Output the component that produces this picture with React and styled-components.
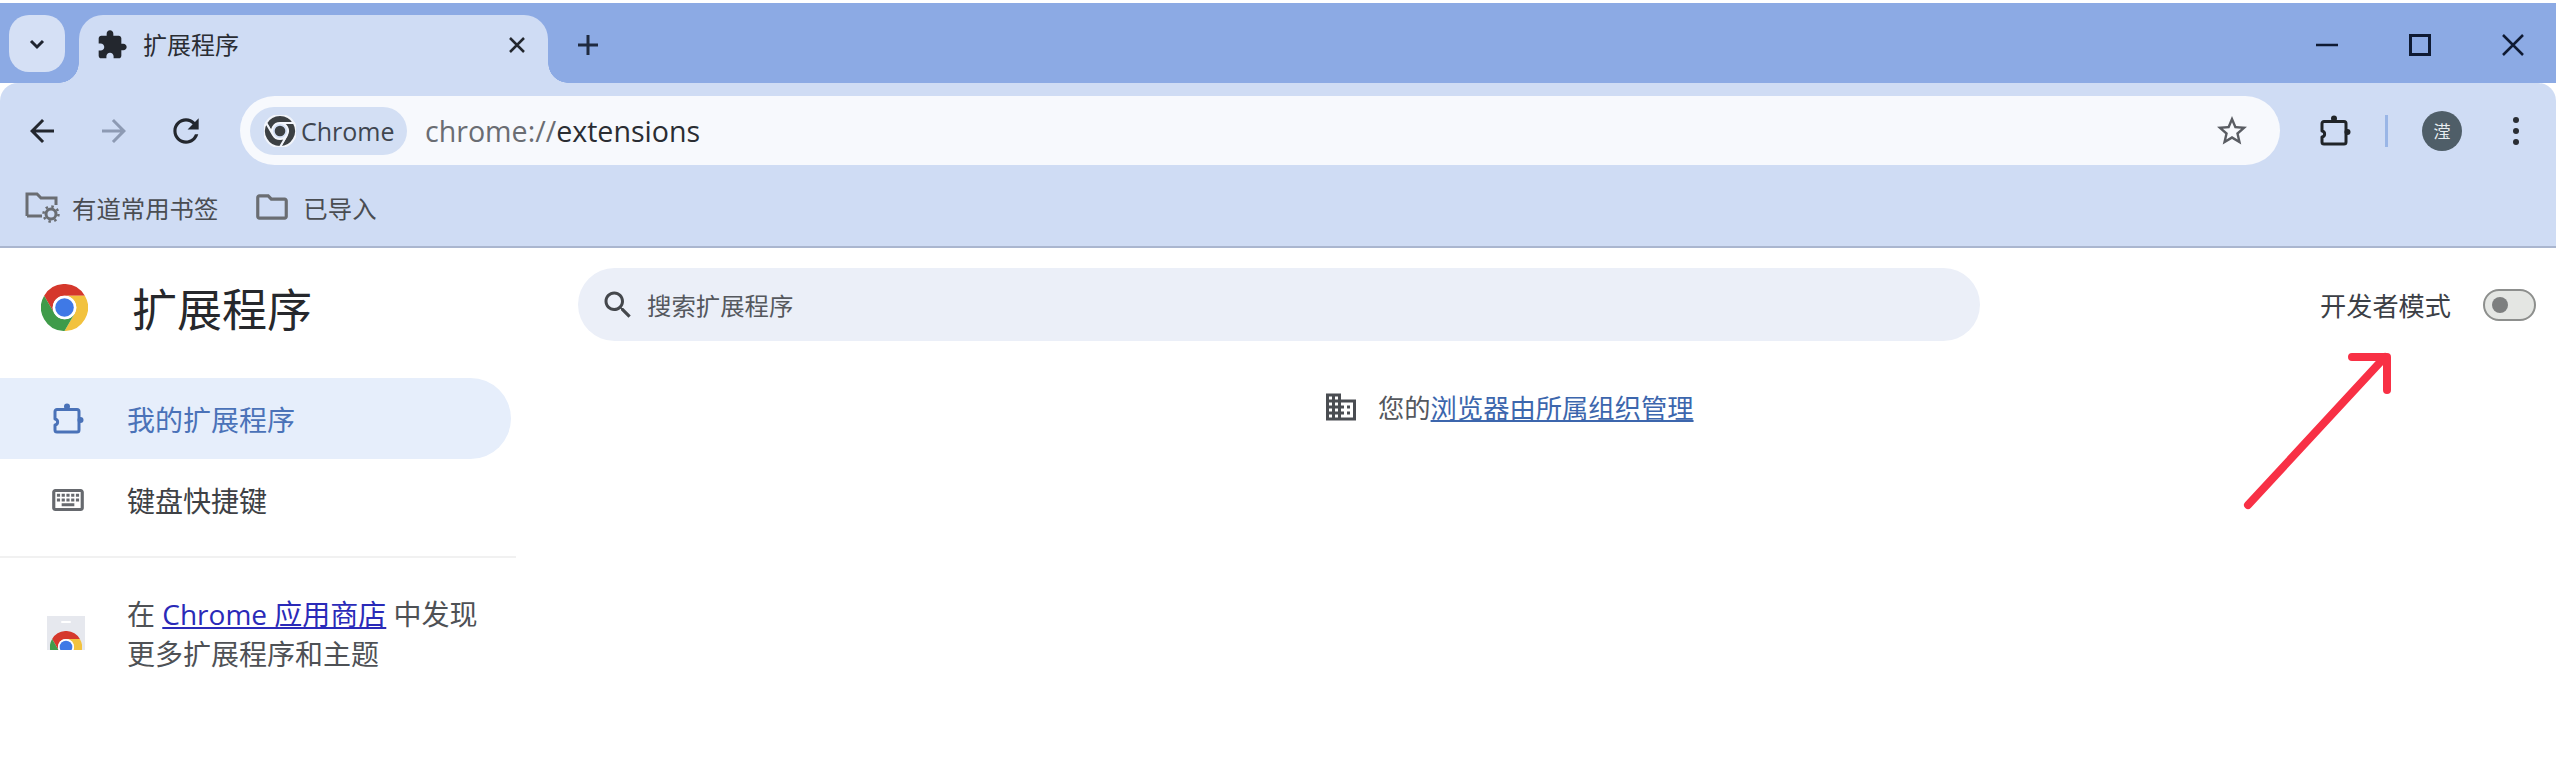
import React from "react";
import styled, { createGlobalStyle } from "styled-components";

const GlobalStyles = createGlobalStyle`
  html, body {
    margin: 0;
    padding: 0;
    background: #fff;
  }
  body {
    font-family: "Open Sans", "Noto Sans CJK SC", sans-serif;
    overflow: hidden;
  }
  svg {
    flex: none;
    display: block;
  }
`;

const STRIP = "#8caae4";
const BAR = "#cfdcf4";

const Window = styled.div`
  width: 2556px;
  height: 758px;
  display: flex;
  flex-direction: column;
  position: relative;
  overflow: hidden;
`;

const TabStrip = styled.div`
  height: 80px;
  margin-top: 3px;
  flex: none;
  background: ${STRIP};
  display: flex;
  align-items: flex-start;
  padding: 12px 32px 0 9px;
  box-sizing: border-box;
`;

const TabSearch = styled.div`
  width: 56px;
  height: 57px;
  border-radius: 20px;
  background: #d5e0f5;
  color: #1f2430;
  display: flex;
  align-items: center;
  justify-content: center;
`;

const Tab = styled.div`
  width: 469px;
  height: 68px;
  margin-left: 14px;
  padding: 0 22px 8px 17px;
  box-sizing: border-box;
  position: relative;
  background: ${BAR};
  border-radius: 24px 24px 0 0;
  display: flex;
  align-items: center;
  color: #23272e;

  &::before,
  &::after {
    content: "";
    position: absolute;
    bottom: 0;
    width: 20px;
    height: 20px;
  }
  &::before {
    left: -20px;
    background: radial-gradient(circle at 0 0, transparent 19.5px, ${BAR} 20px);
  }
  &::after {
    right: -20px;
    background: radial-gradient(circle at 100% 0, transparent 19.5px, ${BAR} 20px);
  }
`;

const TabTitle = styled.span`
  margin-left: 15px;
  font-size: 24px;
  line-height: 1;
  flex: 1;
  color: #2a2d33;
`;

const NewTab = styled.div`
  margin-left: 28px;
  height: 60px;
  display: flex;
  align-items: center;
  color: #1f2a40;
`;

const WindowControls = styled.div`
  margin-left: auto;
  height: 40px;
  margin-top: 10px;
  display: flex;
  align-items: center;
  gap: 71px;
  color: #0f1a33;
`;

const Toolbar = styled.div`
  flex: none;
  height: 165px;
  background: ${BAR};
  border-radius: 18px 18px 0 0;
  border-bottom: 2px solid #aab6cf;
  box-sizing: border-box;
  display: flex;
  flex-direction: column;
  position: relative;
`;

const NavRow = styled.div`
  height: 95px;
  display: flex;
  align-items: center;
  padding: 0 24px 0 28px;
  box-sizing: border-box;
`;

const NavButton = styled.div`
  width: 28px;
  height: 28px;
  margin-right: ${(p) => p.$gap}px;
  display: flex;
  align-items: center;
  justify-content: center;
  color: ${(p) => (p.$dim ? "#8d9ab3" : "#23272e")};
`;

const Omnibox = styled.div`
  width: 2040px;
  height: 69px;
  margin-left: 40px;
  padding: 0 13px 0 10px;
  box-sizing: border-box;
  background: #f7f9fd;
  border-radius: 35px;
  display: flex;
  align-items: center;
`;

const OriginChip = styled.div`
  width: 157px;
  height: 48px;
  border-radius: 24px;
  background: #d3dff4;
  display: flex;
  align-items: center;
  padding-left: 14px;
  box-sizing: border-box;
  color: #3f4650;
  font-size: 25px;
  gap: 5px;
`;

const Url = styled.div`
  margin-left: 18px;
  font-size: 28.6px;
  flex: 1;
  color: #6a6d73;

  b {
    font-weight: 400;
    color: #2a2d33;
  }
`;

const StarWrap = styled.div`
  margin-right: 17px;
  display: flex;
  color: #5a5d63;
`;

const ToolIcons = styled.div`
  margin-left: 38px;
  display: flex;
  align-items: center;
  color: #202428;
`;

const Separator = styled.div`
  width: 3px;
  height: 32px;
  background: #9ab6e6;
  margin: 0 34px 0 33px;
`;

const Avatar = styled.div`
  width: 40px;
  height: 40px;
  border-radius: 50%;
  background: #4f5e68;
  color: #e8edf0;
  font-size: 17px;
  display: flex;
  align-items: center;
  justify-content: center;
`;

const Dots = styled.div`
  margin-left: 51px;
  display: flex;
  flex-direction: column;
  gap: 5px;

  i {
    display: block;
    width: 6px;
    height: 6px;
    border-radius: 50%;
    background: #2a2d33;
  }
`;

const BookmarkRow = styled.div`
  flex: 1;
  display: flex;
  align-items: center;
  padding-left: 24px;
  padding-bottom: 10px;
  box-sizing: border-box;
`;

const Bookmark = styled.div`
  display: flex;
  align-items: center;
  gap: ${(p) => p.$gap}px;
  margin-right: 35px;
  font-size: 24.4px;
  color: #4a4d52;
`;

const Page = styled.div`
  flex: 1;
  display: flex;
  background: #fff;
`;

const Sidebar = styled.aside`
  width: 516px;
  flex: none;
`;

const Brand = styled.div`
  height: 130px;
  display: flex;
  align-items: center;
  padding: 0 0 12px 41px;
  box-sizing: border-box;
  gap: 44px;
`;

const BrandTitle = styled.h1`
  margin: 0;
  font-size: 45px;
  font-weight: 400;
  color: #26282c;
`;

const MenuItem = styled.div`
  width: 511px;
  height: 81px;
  display: flex;
  align-items: center;
  padding-left: ${(p) => p.$pad}px;
  box-sizing: border-box;
  border-radius: 0 41px 41px 0;
  font-size: 28px;
  background: ${(p) => (p.$active ? "#e6eefb" : "transparent")};
  color: ${(p) => (p.$active ? "#4a72b8" : "#3e4145")};
`;

const MenuIcon = styled.span`
  width: ${(p) => 127 - p.$pad}px;
  display: flex;
`;

const Divider = styled.div`
  height: 2px;
  margin-top: 16px;
  background: #f1f1f1;
`;

const StoreRow = styled.div`
  display: flex;
  align-items: center;
  padding: 36px 0 0 47px;
  gap: 42px;
`;

const StoreText = styled.div`
  font-size: 28px;
  line-height: 40px;
  color: #4e5155;
  white-space: nowrap;

  a {
    color: #2a2ab8;
    text-decoration: underline;
  }
`;

const Main = styled.main`
  flex: 1;
  min-width: 0;
  padding-top: 20px;
`;

const HeaderRow = styled.div`
  display: flex;
  align-items: center;
  padding: 0 20px 0 62px;
`;

const SearchBox = styled.div`
  width: 1402px;
  height: 73px;
  border-radius: 37px;
  background: #ebeff8;
  display: flex;
  align-items: center;
  padding-left: 22px;
  box-sizing: border-box;
  gap: 11px;
  font-size: 24.4px;
  color: #55585e;
`;

const DevMode = styled.div`
  margin-left: auto;
  display: flex;
  align-items: center;
  gap: 32px;
  font-size: 26.2px;
  color: #3c4046;
`;

const Toggle = styled.div`
  width: 53px;
  height: 32px;
  border-radius: 16px;
  border: 2px solid #8d8f8d;
  background: #e4e6e3;
  box-sizing: border-box;
  display: flex;
  align-items: center;
  padding-left: 7px;

  i {
    display: block;
    width: 16px;
    height: 16px;
    border-radius: 50%;
    background: #7d7f7f;
  }
`;

const Managed = styled.div`
  margin: 46px 0 0 807px;
  display: flex;
  align-items: center;
  gap: 19px;
  font-size: 26.3px;
  color: #55585e;

  a {
    color: #3c66ad;
    text-decoration: underline;
  }
`;

const ArrowMark = styled.svg`
  position: absolute;
  left: 2230px;
  top: 340px;
`;

const Icon = ({ d, size = 24, vb = 24, color }) => (
  <svg width={size} height={size} viewBox={`0 0 ${vb} ${vb}`} fill={color || "currentColor"}>
    <path d={d} />
  </svg>
);

const ICONS = {
  puzzle:
    "M20.5 11H19V7c0-1.1-.9-2-2-2h-4V3.5C13 2.12 11.88 1 10.5 1S8 2.12 8 3.5V5H4c-1.1 0-1.99.9-1.99 2v3.8H3.5c1.49 0 2.7 1.21 2.7 2.7s-1.21 2.7-2.7 2.7H2V20c0 1.1.9 2 2 2h3.8v-1.5c0-1.49 1.21-2.7 2.7-2.7 1.49 0 2.7 1.21 2.7 2.7V22H17c1.1 0 2-.9 2-2v-4h1.5c1.38 0 2.5-1.12 2.5-2.5S21.88 11 20.5 11z",
  back: "M20 11H7.83l5.59-5.59L12 4l-8 8 8 8 1.41-1.41L7.83 13H20v-2z",
  forward: "M4 11h12.17l-5.59-5.59L12 4l8 8-8 8-1.41-1.41L16.17 13H4v-2z",
  reload:
    "M17.65 6.35C16.2 4.9 14.21 4 12 4c-4.42 0-7.99 3.58-7.99 8s3.57 8 7.99 8c3.73 0 6.84-2.55 7.73-6h-2.08c-.82 2.33-3.04 4-5.65 4-3.31 0-6-2.69-6-6s2.69-6 6-6c1.66 0 3.14.69 4.22 1.78L13 11h7V4l-2.35 2.35z",
  star: "M22 9.24l-7.19-.62L12 2 9.19 8.63 2 9.24l5.46 4.73L5.82 21 12 17.27 18.18 21l-1.63-7.03L22 9.24zM12 15.4l-3.76 2.27 1-4.28-3.32-2.88 4.38-.38L12 6.1l1.71 4.04 4.38.38-3.32 2.88 1 4.28L12 15.4z",
  search:
    "M15.5 14h-.79l-.28-.27C15.41 12.59 16 11.11 16 9.5 16 5.91 13.09 3 9.5 3S3 5.91 3 9.5 5.91 16 9.5 16c1.61 0 3.09-.59 4.23-1.57l.27.28v.79l5 4.99L20.49 19l-4.99-5zm-6 0C7.01 14 5 11.99 5 9.5S7.01 5 9.5 5 14 7.01 14 9.5 11.99 14 9.5 14z",
  domain:
    "M12 7V3H2v18h20V7H12zM6 19H4v-2h2v2zm0-4H4v-2h2v2zm0-4H4V9h2v2zm0-4H4V5h2v2zm4 12H8v-2h2v2zm0-4H8v-2h2v2zm0-4H8V9h2v2zm0-4H8V5h2v2zm10 12h-8v-2h2v-2h-2v-2h2v-2h-2V9h8v10zm-2-8h-2v2h2v-2zm0 4h-2v2h2v-2z",
  keyboard:
    "M20 5H4c-1.1 0-1.99.9-1.99 2L2 17c0 1.1.9 2 2 2h16c1.1 0 2-.9 2-2V7c0-1.1-.9-2-2-2zm0 12H4V7h16v10zm-9-9h2v2h-2zm0 3h2v2h-2zM8 8h2v2H8zm0 3h2v2H8zm-3 0h2v2H5zm0-3h2v2H5zm3 6h8v2H8zm6-3h2v2h-2zm0-3h2v2h-2zm3 3h2v2h-2zm0-3h2v2h-2z",
  folder:
    "M9.17 6l2 2H20v10H4V6h5.17M10 4H4c-1.1 0-1.99.9-1.99 2L2 18c0 1.1.9 2 2 2h16c1.1 0 2-.9 2-2V8c0-1.1-.9-2-2-2h-8l-2-2z",
};

// outline puzzle piece used by the toolbar and the active menu row
const PuzzleOutline = ({ size = 34 }) => (
  <svg width={size} height={size} viewBox="0 0 34 34" fill="none" stroke="currentColor" strokeWidth="3" strokeLinejoin="round">
    <path d="M6 7.5h20a2 2 0 0 1 2 2V28a2 2 0 0 1-2 2H6a2 2 0 0 1-2-2v-5c3.5-.5 3.500-5.500 0-6V9.500a2 2 0 0 1 2-2z" />
    <circle cx="16" cy="4.500" r="3" fill="currentColor" stroke="none" />
    <circle cx="29.500" cy="18" r="3" fill="currentColor" stroke="none" />
  </svg>
);

const CHROME_SEGMENT = "M3.2 12A24 24 0 0 1 44.8 12L24 12A12 12 0 0 0 13.6 30Z";

const ChromeLogo = ({ size = 47 }) => (
  <svg width={size} height={size} viewBox="0 0 48 48">
    <path d={CHROME_SEGMENT} fill="#d5382c" />
    <path d={CHROME_SEGMENT} fill="#f2c23e" transform="rotate(120 24 24)" />
    <path d={CHROME_SEGMENT} fill="#3f9b4a" transform="rotate(240 24 24)" />
    <circle cx="24" cy="24" r="12" fill="#fff" />
    <circle cx="24" cy="24" r="9.500" fill="#3f79e6" />
  </svg>
);

// greyscale logo of the origin chip, white seams between the three parts
const ChromeMono = ({ size = 28 }) => (
  <svg width={size} height={size} viewBox="0 0 48 48">
    <g fill="#3c4043" stroke="#f2f5fb" strokeWidth="3">
      <path d={CHROME_SEGMENT} />
      <path d={CHROME_SEGMENT} transform="rotate(120 24 24)" />
      <path d={CHROME_SEGMENT} transform="rotate(240 24 24)" />
    </g>
    <circle cx="24" cy="24" r="8" fill="#3c4043" />
  </svg>
);

// shopping bag of the web store, the logo only shows above its lower edge
const StoreIcon = () => (
  <svg width="38" height="36" viewBox="0 0 38 36">
    <rect x="0" y="0" width="38" height="34" fill="#e6e8ee" />
    <rect x="14" y="5" width="10" height="2" rx="1" fill="#fff" />
    <svg x="3" y="15" width="32" height="19" viewBox="0 0 48 28.500">
      <path d={CHROME_SEGMENT} fill="#d5382c" />
      <path d={CHROME_SEGMENT} fill="#f2c23e" transform="rotate(120 24 24)" />
      <path d={CHROME_SEGMENT} fill="#3f9b4a" transform="rotate(240 24 24)" />
      <circle cx="24" cy="24" r="12" fill="#fff" />
      <circle cx="24" cy="24" r="9.500" fill="#3f79e6" />
    </svg>
  </svg>
);

const ManagedFolder = () => (
  <svg width="36" height="34" viewBox="0 0 36 34" fill="none">
    <path d="M3 26V4h10l4 4h15v7" stroke="#6a6d72" strokeWidth="3" />
    <path d="M3 26h15" stroke="#6a6d72" strokeWidth="3" />
    <circle cx="27" cy="24" r="5" stroke="#6a6d72" strokeWidth="3" />
    <circle cx="27" cy="24" r="7.500" stroke="#6a6d72" strokeWidth="2.500" strokeDasharray="2.500 3.400" />
  </svg>
);

const App = () => {
  return (
    <Window>
      <GlobalStyles />
      <TabStrip>
        <TabSearch>
          <svg width="20" height="20" viewBox="0 0 20 20" fill="none" stroke="currentColor" strokeWidth="3">
            <path d="M4 7l6 6 6-6" />
          </svg>
        </TabSearch>
        <Tab>
          <Icon d={ICONS.puzzle} size={32} />
          <TabTitle>扩展程序</TabTitle>
          <svg width="18" height="18" viewBox="0 0 18 18" stroke="currentColor" strokeWidth="2.500">
            <path d="M2 2l14 14M16 2L2 16" />
          </svg>
        </Tab>
        <NewTab>
          <svg width="24" height="24" viewBox="0 0 24 24" stroke="currentColor" strokeWidth="3">
            <path d="M12 2v20M2 12h20" />
          </svg>
        </NewTab>
        <WindowControls>
          <svg width="22" height="22" viewBox="0 0 22 22" stroke="currentColor" strokeWidth="2.500">
            <path d="M0 11h22" />
          </svg>
          <svg width="22" height="22" viewBox="0 0 22 22" fill="none" stroke="currentColor" strokeWidth="3">
            <rect x="1.500" y="1.500" width="19" height="19" />
          </svg>
          <svg width="22" height="22" viewBox="0 0 22 22" stroke="currentColor" strokeWidth="2.500">
            <path d="M1 1l20 20M21 1L1 21" />
          </svg>
        </WindowControls>
      </TabStrip>

      <Toolbar>
        <NavRow>
          <NavButton $gap={44}>
            <Icon d={ICONS.back} size={36} />
          </NavButton>
          <NavButton $gap={44} $dim>
            <Icon d={ICONS.forward} size={36} />
          </NavButton>
          <NavButton $gap={0}>
            <Icon d={ICONS.reload} size={38} />
          </NavButton>
          <Omnibox>
            <OriginChip>
              <ChromeMono size={32} />
              Chrome
            </OriginChip>
            <Url>
              chrome://<b>extensions</b>
            </Url>
            <StarWrap>
              <Icon d={ICONS.star} size={36} />
            </StarWrap>
          </Omnibox>
          <ToolIcons>
            <PuzzleOutline />
            <Separator />
            <Avatar>滢</Avatar>
            <Dots>
              <i />
              <i />
              <i />
            </Dots>
          </ToolIcons>
        </NavRow>
        <BookmarkRow>
          <Bookmark $gap={12}>
            <ManagedFolder />
            有道常用书签
          </Bookmark>
          <Bookmark $gap={12}>
            <Icon d={ICONS.folder} size={38} color="#6a6d72" />
            已导入
          </Bookmark>
        </BookmarkRow>
      </Toolbar>

      <Page>
        <Sidebar>
          <Brand>
            <ChromeLogo />
            <BrandTitle>扩展程序</BrandTitle>
          </Brand>
          <MenuItem $active $pad={51}>
            <MenuIcon $pad={51}>
              <PuzzleOutline />
            </MenuIcon>
            我的扩展程序
          </MenuItem>
          <MenuItem $pad={49}>
            <MenuIcon $pad={49}>
              <Icon d={ICONS.keyboard} size={38} color="#66696e" />
            </MenuIcon>
            键盘快捷键
          </MenuItem>
          <Divider />
          <StoreRow>
            <StoreIcon />
            <StoreText>
              在 <a>Chrome 应用商店</a> 中发现
              <br />
              更多扩展程序和主题
            </StoreText>
          </StoreRow>
        </Sidebar>

        <Main>
          <HeaderRow>
            <SearchBox>
              <Icon d={ICONS.search} size={36} color="#44474c" />
              搜索扩展程序
            </SearchBox>
            <DevMode>
              开发者模式
              <Toggle>
                <i />
              </Toggle>
            </DevMode>
          </HeaderRow>
          <Managed>
            <Icon d={ICONS.domain} size={36} color="#4a4d52" />
            <span>
              您的<a>浏览器由所属组织管理</a>
            </span>
          </Managed>
        </Main>
      </Page>

      <ArrowMark width="170" height="180" viewBox="0 0 170 180" fill="none" stroke="#f83045" strokeWidth="8" strokeLinecap="round" strokeLinejoin="round">
        <path d="M18 165L155 17M122 17h35v33" />
      </ArrowMark>
    </Window>
  );
};

export default App;
